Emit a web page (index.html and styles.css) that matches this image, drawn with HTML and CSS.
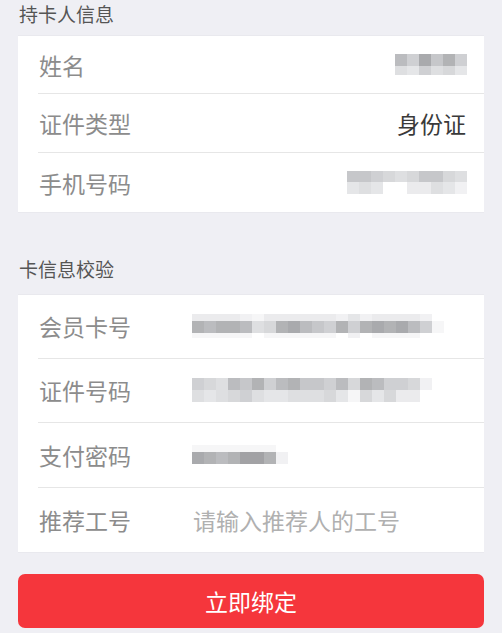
FILE: index.html
```html
<!DOCTYPE html>
<html lang="zh-CN">
<head>
<meta charset="utf-8">
<title>绑定会员卡</title>
<link rel="stylesheet" href="styles.css">
</head>
<body>
<div class="page">
  <div class="section-title first">持卡人信息</div>
  <div class="card card-info">
    <div class="row">
      <span class="label">姓名</span>
      <div class="mosaic mosaic-name">
        <div class="mrow h12"><i class="g3"></i><i class="g5"></i><i class="g1"></i><i class="g4"></i><i class="g2"></i><i class="g5"></i></div>
        <div class="mrow h9"><i class="g7"></i><i class="g8"></i><i class="g5"></i><i class="g7"></i><i class="g6"></i><i class="g8"></i></div>
      </div>
    </div>
    <div class="row">
      <span class="label">证件类型</span>
      <span class="value">身份证</span>
    </div>
    <div class="row">
      <span class="label">手机号码</span>
      <div class="mosaic mosaic-phone">
        <div class="mrow h11"><i class="g4"></i><i class="g4"></i><i class="g5"></i><i class="g6"></i><i class="g7"></i><i class="g6"></i><i class="g4"></i><i class="g4"></i><i class="g6"></i><i class="g7"></i></div>
        <div class="mrow h12"><i class="g8"></i><i class="g7"></i><i class="g8"></i><i class="gw"></i><i class="gw"></i><i class="g9"></i><i class="g9"></i><i class="g7"></i><i class="g8"></i><i class="ga"></i></div>
      </div>
    </div>
  </div>

  <div class="section-title second">卡信息校验</div>
  <div class="card card-verify">
    <div class="row">
      <span class="label wide">会员卡号</span>
      <div class="mosaic">
        <div class="mrow h7"><i class="g9"></i><i class="g9"></i><i class="g9"></i><i class="g9"></i><i class="ga"></i><i class="gb"></i><i class="g9"></i><i class="g9"></i><i class="g9"></i><i class="g9"></i><i class="g9"></i><i class="g9"></i><i class="ga"></i><i class="g8"></i><i class="ga"></i><i class="g9"></i><i class="g9"></i><i class="g9"></i><i class="g9"></i><i class="ga"></i></div>
        <div class="mrow h12"><i class="g2"></i><i class="g3"></i><i class="g2"></i><i class="g2"></i><i class="g3"></i><i class="g7"></i><i class="g6"></i><i class="g2"></i><i class="g1"></i><i class="g3"></i><i class="g4"></i><i class="g5"></i><i class="g2"></i><i class="g5"></i><i class="g2"></i><i class="g1"></i><i class="g2"></i><i class="g1"></i><i class="g3"></i><i class="g5"></i><i class="gb"></i></div>
        <div class="mrow h5"><i class="gb"></i><i class="gb"></i><i class="gb"></i><i class="gb"></i><i class="gb"></i><i class="gw"></i><i class="gb"></i><i class="gb"></i><i class="gb"></i><i class="gb"></i><i class="gb"></i><i class="gb"></i><i class="gw"></i><i class="ga"></i><i class="gw"></i><i class="gb"></i><i class="gb"></i><i class="gb"></i><i class="gb"></i><i class="gw"></i></div>
      </div>
    </div>
    <div class="row">
      <span class="label wide">证件号码</span>
      <div class="mosaic">
        <div class="mrow h12"><i class="g5"></i><i class="g6"></i><i class="g7"></i><i class="g3"></i><i class="g4"></i><i class="g2"></i><i class="g5"></i><i class="g3"></i><i class="g2"></i><i class="g4"></i><i class="g4"></i><i class="g5"></i><i class="g3"></i><i class="g6"></i><i class="g2"></i><i class="g3"></i><i class="g5"></i><i class="g5"></i><i class="g6"></i><i class="ga"></i></div>
        <div class="mrow h12"><i class="g7"></i><i class="g8"></i><i class="g7"></i><i class="g6"></i><i class="g5"></i><i class="g7"></i><i class="g8"></i><i class="g8"></i><i class="g7"></i><i class="g7"></i><i class="g7"></i><i class="g6"></i><i class="g8"></i><i class="gb"></i><i class="g6"></i><i class="g8"></i><i class="g6"></i><i class="g9"></i><i class="g9"></i></div>
      </div>
    </div>
    <div class="row">
      <span class="label wide">支付密码</span>
      <div class="mosaic">
        <div class="mrow h7"><i class="gb"></i><i class="gb"></i><i class="gb"></i><i class="gb"></i><i class="gb"></i><i class="gb"></i><i class="gb"></i><i class="gw"></i></div>
        <div class="mrow h12"><i class="g1"></i><i class="g2"></i><i class="g3"></i><i class="g2"></i><i class="g0"></i><i class="g0"></i><i class="g2"></i><i class="ga"></i></div>
      </div>
    </div>
    <div class="row">
      <span class="label wide">推荐工号</span>
      <span class="placeholder">请输入推荐人的工号</span>
    </div>
  </div>

  <button class="submit" type="button">立即绑定</button>
</div>
</body>
</html>
```

FILE: styles.css
```css
* { box-sizing: border-box; }
html, body {
  margin: 0;
  padding: 0;
  background: #efeff4;
}
body {
  font-family: "Noto Sans CJK SC", "Noto Sans", sans-serif;
  width: 502px;
  height: 633px;
  overflow: hidden;
}
.page {
  display: flex;
  flex-direction: column;
}
.section-title {
  padding-left: 19px;
  font-size: 19px;
  line-height: 24px;
  color: #555555;
}
.section-title.first {
  height: 35px;
  line-height: 28px;
  padding-top: 0;
}
.section-title.second {
  height: 81px;
  padding-top: 44px;
}
.card {
  margin: 0 18px;
  background: #ffffff;
  border-top: 1px solid #e9e9ee;
  border-bottom: 1px solid #e9e9ee;
}
.row {
  display: flex;
  align-items: center;
  margin-left: 20px;
  padding-right: 19px;
  border-bottom: 1px solid #e6e6e6;
}
.row:last-child { border-bottom: none; }
.card-info .row { height: 59px; }
.card-info .row:first-child { height: 58px; }
.card-verify .row { height: 64.5px; }
.card-verify .row:first-child { height: 63.5px; }
.label {
  font-size: 23px;
  color: #8c8c8c;
  line-height: 30px;
  flex: none;
  padding-left: 1px;
}
.label.wide { width: 154px; }
.value {
  margin-left: auto;
  font-size: 23px;
  color: #3a3a3a;
  line-height: 30px;
  margin-right: -1px;
}
.placeholder {
  font-size: 23px;
  color: #b0b0b0;
  line-height: 30px;
  padding-left: 1px;
}
.mosaic {
  display: flex;
  flex-direction: column;
}
.mosaic-name, .mosaic-phone { margin-left: auto; }
.mosaic-name { margin-right: -2px; }
.mosaic-phone { margin-right: -2px; }
.mrow { display: flex; }
.mrow i { display: block; width: 12px; height: 100%; }
.h5 { height: 5px; }
.h7 { height: 7px; }
.h9 { height: 9px; }
.h11 { height: 11px; }
.h12 { height: 12px; }
.g0 { background: #a2a2a5; }
.g1 { background: #a9aaad; }
.g2 { background: #b2b3b5; }
.g3 { background: #bbbcbf; }
.g4 { background: #c6c7ca; }
.g5 { background: #cfd0d3; }
.g6 { background: #d7d8da; }
.g7 { background: #dedfe1; }
.g8 { background: #e5e6e8; }
.g9 { background: #ebebed; }
.ga { background: #f1f1f3; }
.gb { background: #f6f6f7; }
.gw { background: #ffffff; }
.submit {
  margin: 21px 18px 0;
  height: 54px;
  border: none;
  border-radius: 7px;
  background: #f5363c;
  color: #ffffff;
  font-family: "Noto Sans CJK SC", "Noto Sans", sans-serif;
  font-size: 23px;
  padding: 0;
}
```
